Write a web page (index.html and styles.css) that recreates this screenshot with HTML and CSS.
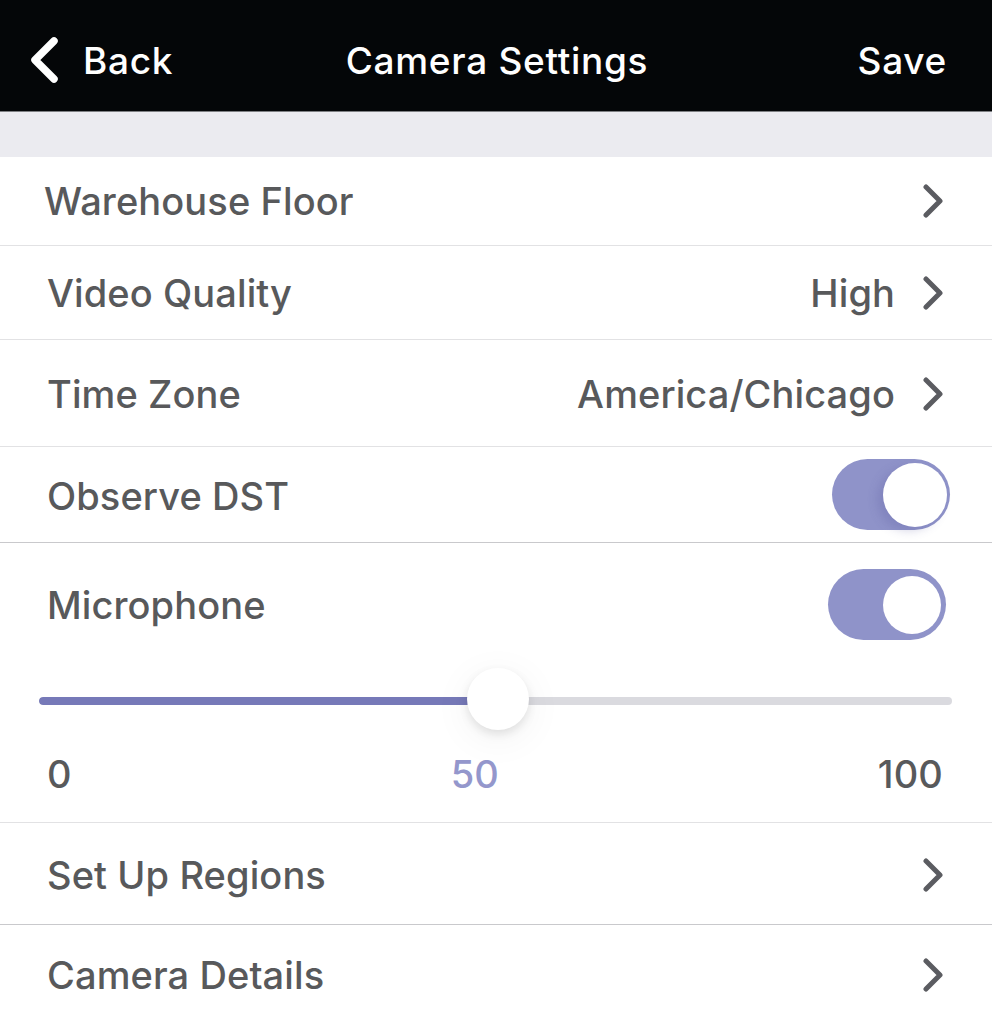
FILE: index.html
```html
<!DOCTYPE html>
<html lang="en">
<head>
<meta charset="utf-8">
<title>Camera Settings</title>
<link rel="stylesheet" href="styles.css">
</head>
<body>
<header class="navbar">
  <div class="nav-left">
    <svg class="back-icon" width="30" height="48" viewBox="0 0 30 48" aria-hidden="true"><polyline points="25,5 6,24 25,43" fill="none" stroke="#fff" stroke-width="7.5" stroke-linecap="round" stroke-linejoin="round"/></svg>
    <span class="nav-btn">Back</span>
  </div>
  <div class="nav-title">Camera Settings</div>
  <div class="nav-right"><span class="nav-btn">Save</span></div>
</header>
<div class="band"></div>
<main class="list">
  <div class="row row-1">
    <span class="label label-first">Warehouse Floor</span>
    <span class="accessory">
      <svg class="chev" width="20" height="34" viewBox="0 0 20 34"><polyline points="3,3 17,17 3,31" fill="none" stroke="#5b5c61" stroke-width="5" stroke-linecap="round" stroke-linejoin="round"/></svg>
    </span>
  </div>
  <div class="row row-2">
    <span class="label">Video Quality</span>
    <span class="accessory"><span class="value">High</span>
      <svg class="chev" width="20" height="34" viewBox="0 0 20 34"><polyline points="3,3 17,17 3,31" fill="none" stroke="#5b5c61" stroke-width="5" stroke-linecap="round" stroke-linejoin="round"/></svg>
    </span>
  </div>
  <div class="row row-3">
    <span class="label">Time Zone</span>
    <span class="accessory"><span class="value">America/Chicago</span>
      <svg class="chev" width="20" height="34" viewBox="0 0 20 34"><polyline points="3,3 17,17 3,31" fill="none" stroke="#5b5c61" stroke-width="5" stroke-linecap="round" stroke-linejoin="round"/></svg>
    </span>
  </div>
  <div class="row row-4 row-dark">
    <span class="label">Observe DST</span>
    <span class="toggle toggle-dst"><span class="knob"></span></span>
  </div>
  <section class="mic">
    <div class="mic-head">
      <span class="label">Microphone</span>
      <span class="toggle toggle-mic"><span class="knob"></span></span>
    </div>
    <div class="slider">
      <div class="track"><div class="fill" style="width:50%"></div></div>
      <div class="thumb" style="left:50%"></div>
    </div>
    <div class="scale">
      <span class="tick">0</span>
      <span class="tick tick-current">50</span>
      <span class="tick">100</span>
    </div>
  </section>
  <div class="row row-6 row-dark">
    <span class="label">Set Up Regions</span>
    <span class="accessory">
      <svg class="chev" width="20" height="34" viewBox="0 0 20 34"><polyline points="3,3 17,17 3,31" fill="none" stroke="#5b5c61" stroke-width="5" stroke-linecap="round" stroke-linejoin="round"/></svg>
    </span>
  </div>
  <div class="row row-7">
    <span class="label">Camera Details</span>
    <span class="accessory">
      <svg class="chev" width="20" height="34" viewBox="0 0 20 34"><polyline points="3,3 17,17 3,31" fill="none" stroke="#5b5c61" stroke-width="5" stroke-linecap="round" stroke-linejoin="round"/></svg>
    </span>
  </div>
</main>
</body>
</html>
```
FILE: styles.css
```css
* { box-sizing: border-box; }
html, body { margin: 0; padding: 0; }
body {
  width: 992px;
  min-height: 1014px;
  background: #ffffff;
  font-family: Inter, "Noto Sans", "Liberation Sans", sans-serif;
  color: #58595b;
  overflow: hidden;
}

.navbar {
  height: 112px;
  background: #040608;
  border-bottom: 1px solid #7e8083;
  display: grid;
  grid-template-columns: 1fr auto 1fr;
  align-items: center;
  padding: 10px 45px 0 47px;
  color: #ffffff;
  font-size: 37px;
  font-weight: 500;
  letter-spacing: 0.7px;
}
.nav-left { display: flex; align-items: center; gap: 24px; margin-left: -18px; }
.back-icon { display: block; margin-top: -2px; }
.nav-title { text-align: center; }
.nav-right { display: flex; justify-content: flex-end; }

.band { height: 45px; background: #ebebf0; }

.list { font-size: 38px; font-weight: 500; letter-spacing: 0.1px; }

.row {
  display: flex;
  align-items: center;
  justify-content: space-between;
  padding: 0 49px 0 47px;
  border-bottom: 1px solid #e2e2e4;
}
.row-dark { border-bottom-color: #c9c9cc; }
.row-1 { height: 89px; }
.row-2 { height: 94px; }
.row-3 { height: 107px; padding-top: 2px; }
.row-4 { height: 96px; padding-top: 3px; padding-right: 42px; }
.row-6 { height: 102px; padding-top: 3px; }
.row-7 { height: 104px; border-bottom: none; padding-top: 0; padding-bottom: 4px; }

.label-first { margin-left: -3px; }

.accessory { display: flex; align-items: center; gap: 28px; }
.chev { display: block; }

.toggle {
  position: relative;
  width: 118px;
  height: 71px;
  border-radius: 36px;
  background: #8f93c9;
  display: block;
}
.toggle .knob {
  position: absolute;
  border-radius: 50%;
  background: #ffffff;
}
.toggle-dst { margin-top: -4px; }
.toggle-dst .knob { width: 64px; height: 64px; right: 3px; top: 4px; box-shadow: -6px 4px 10px rgba(90, 90, 160, 0.25); }
.toggle-mic .knob { width: 58px; height: 58px; right: 5px; top: 7px; }

.mic { border-bottom: 1px solid #e2e2e4; height: 280px; display: flex; flex-direction: column; }
.mic-head {
  height: 121px;
  display: flex;
  align-items: center;
  justify-content: space-between;
  padding: 2px 46px 0 47px;
}
.slider {
  position: relative;
  height: 74px;
  margin: 0 40px 0 39px;
}
.track {
  position: absolute;
  left: 0; right: 0;
  top: 33px;
  height: 8px;
  border-radius: 4px;
  background: #dadadf;
  overflow: hidden;
}
.fill { height: 100%; background: #7679b8; border-radius: 4px 0 0 4px; }
.thumb {
  position: absolute;
  top: 4px;
  width: 62px;
  height: 62px;
  margin-left: -29px;
  border-radius: 50%;
  background: #ffffff;
  box-shadow: 0 4px 10px rgba(0, 0, 0, 0.10), 0 8px 40px rgba(0, 0, 0, 0.06);
}
.scale {
  height: 71px;
  display: flex;
  align-items: center;
  justify-content: space-between;
  padding: 0 49px 0 47px;
}
.tick-current { color: #9497cc; }
```
